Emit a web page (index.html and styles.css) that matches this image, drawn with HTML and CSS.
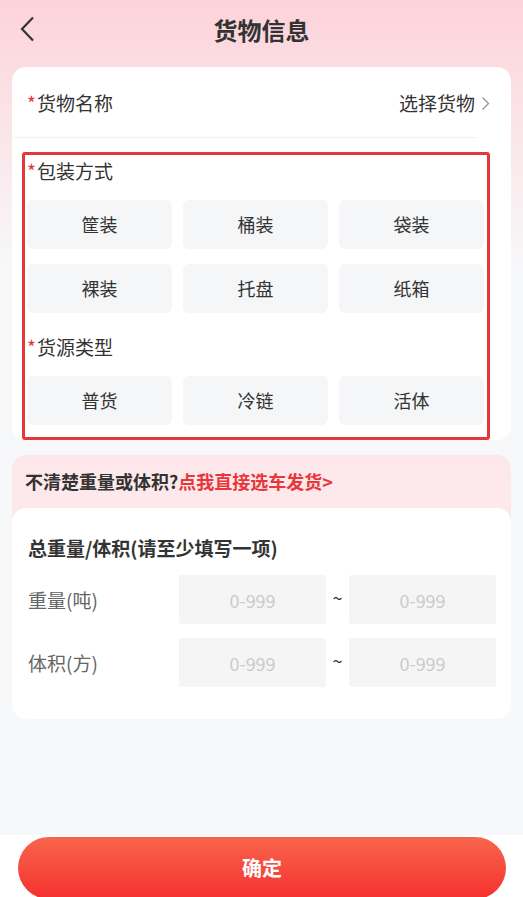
FILE: index.html
```html
<!DOCTYPE html>
<html>
<head>
<title>货物信息</title>
<meta http-equiv="Content-Type" content="text/html; charset=utf-8" />
<link rel="stylesheet" href="styles.css">
</head>
<body>
<div class="page">
	<div class="main">
		<div class="head">
			<a class="back" href="#"><svg width="16" height="26" viewBox="0 0 16 26"><polyline points="13,1.5 2,13 13,24.5" fill="none" stroke="#333" stroke-width="2.2" stroke-linejoin="miter"/></svg></a>
			<h1>货物信息</h1>
		</div>

		<div class="card goods">
			<div class="name-row">
				<span class="label"><i>*</i>货物名称</span>
				<span class="pick">选择货物<svg width="9" height="15" viewBox="0 0 9 15"><polyline points="1.5,1.5 7.5,7.5 1.5,13.5" fill="none" stroke="#999" stroke-width="1.4"/></svg></span>
			</div>
			<div class="opts">
				<div class="opt-title"><i>*</i>包装方式</div>
				<ul class="grid">
					<li>筐装</li>
					<li>桶装</li>
					<li>袋装</li>
					<li>裸装</li>
					<li>托盘</li>
					<li>纸箱</li>
				</ul>
				<div class="opt-title second"><i>*</i>货源类型</div>
				<ul class="grid">
					<li>普货</li>
					<li>冷链</li>
					<li>活体</li>
				</ul>
			</div>
		</div>

		<div class="card size">
			<div class="tip">不清楚重量或体积?<a href="#">点我直接选车发货&gt;</a></div>
			<div class="size-body">
				<div class="size-title">总重量/体积(请至少填写一项)</div>
				<div class="size-row">
					<span class="size-label">重量(吨)</span>
					<input type="text" placeholder="0-999">
					<span class="tilde">~</span>
					<input type="text" placeholder="0-999">
				</div>
				<div class="size-row">
					<span class="size-label">体积(方)</span>
					<input type="text" placeholder="0-999">
					<span class="tilde">~</span>
					<input type="text" placeholder="0-999">
				</div>
			</div>
		</div>
	</div>
	<div class="foot">
		<a class="ok" href="#">确定</a>
	</div>
</div>
</body>
</html>
```

FILE: styles.css
```css
* {margin:0;padding:0;box-sizing:border-box;list-style:none;}
html,body {width:523px;height:897px;overflow:hidden;}
body {font-family:"Noto Sans CJK SC","Noto Sans",sans-serif;color:#333;background:#f7f8fa;}
a {text-decoration:none;}
i {font-style:normal;color:#e8363b;}
.page {height:897px;display:flex;flex-direction:column;}
.main {flex:1;background:linear-gradient(180deg,#fdd3da 0,#fae5e8 130px,#f7f8fa 270px);}
.head {height:60px;position:relative;display:flex;align-items:center;justify-content:center;}
.head h1 {font-size:24px;font-weight:700;color:#333;line-height:60px;}
.back {position:absolute;left:20px;top:16px;display:block;width:16px;height:26px;}
.back svg {display:block;}

.card {margin:0 12px;border-radius:14px;}
.goods {margin-top:7px;background:#fff;padding-bottom:0;}
.name-row {height:71px;display:flex;align-items:center;justify-content:space-between;padding:0 0 0 15px;border-bottom:1px solid #f1f1f1;margin-right:34px;}
.name-row .label {font-size:19px;}
.name-row .pick {font-size:19px;display:flex;align-items:center;margin-right:-13px;}
.name-row .pick svg {margin-left:6px;margin-top:2px;}
.name-row i {margin-right:1px;}

.opts {margin:14px 21px -3px 10px;border:3px solid #e5383b;border-radius:3px;padding:0 3px 12px 2px;position:relative;}
.opt-title {height:32px;line-height:32px;font-size:19px;margin-bottom:13px;}
.opt-title i {margin-right:1px;}
.opt-title.second {margin-top:18px;margin-bottom:13px;}
.grid {display:grid;grid-template-columns:repeat(3,1fr);gap:15px 11px;}
.grid li {height:49px;line-height:49px;text-align:center;background:#f5f6f7;border-radius:6px;font-size:18px;color:#333;}

.size {margin-top:18px;background:linear-gradient(180deg,#fde7ea,#fdeff1);}
.tip {height:53px;line-height:53px;padding-left:13px;font-size:18px;font-weight:700;color:#333;}
.tip a {color:#e8363b;}
.size-body {background:#fff;border-radius:14px;padding:22px 14px 32px 16px;}
.size-title {height:36px;line-height:36px;font-size:19px;font-weight:700;margin-bottom:9px;}
.size-row {display:flex;align-items:center;height:49px;}
.size-row + .size-row {margin-top:14px;}
.size-label {width:151px;font-size:19px;color:#666;}
.size-row input {width:147px;height:49px;border:0;outline:0;border-radius:3px;background:#f5f5f5;font-family:inherit;font-size:18px;text-align:center;color:#333;}
.size-row input::placeholder {color:#cbcbcb;}
.tilde {width:23px;text-align:center;font-size:18px;color:#333;margin-top:-5px;}

.foot {height:62px;background:#fff;padding:2px 17px 0 18px;overflow:hidden;}
.ok {display:block;height:62px;line-height:62px;border-radius:31px;text-align:center;color:#fff;font-size:20px;font-weight:700;background:linear-gradient(180deg,#f8654c,#f5312f);}
```
